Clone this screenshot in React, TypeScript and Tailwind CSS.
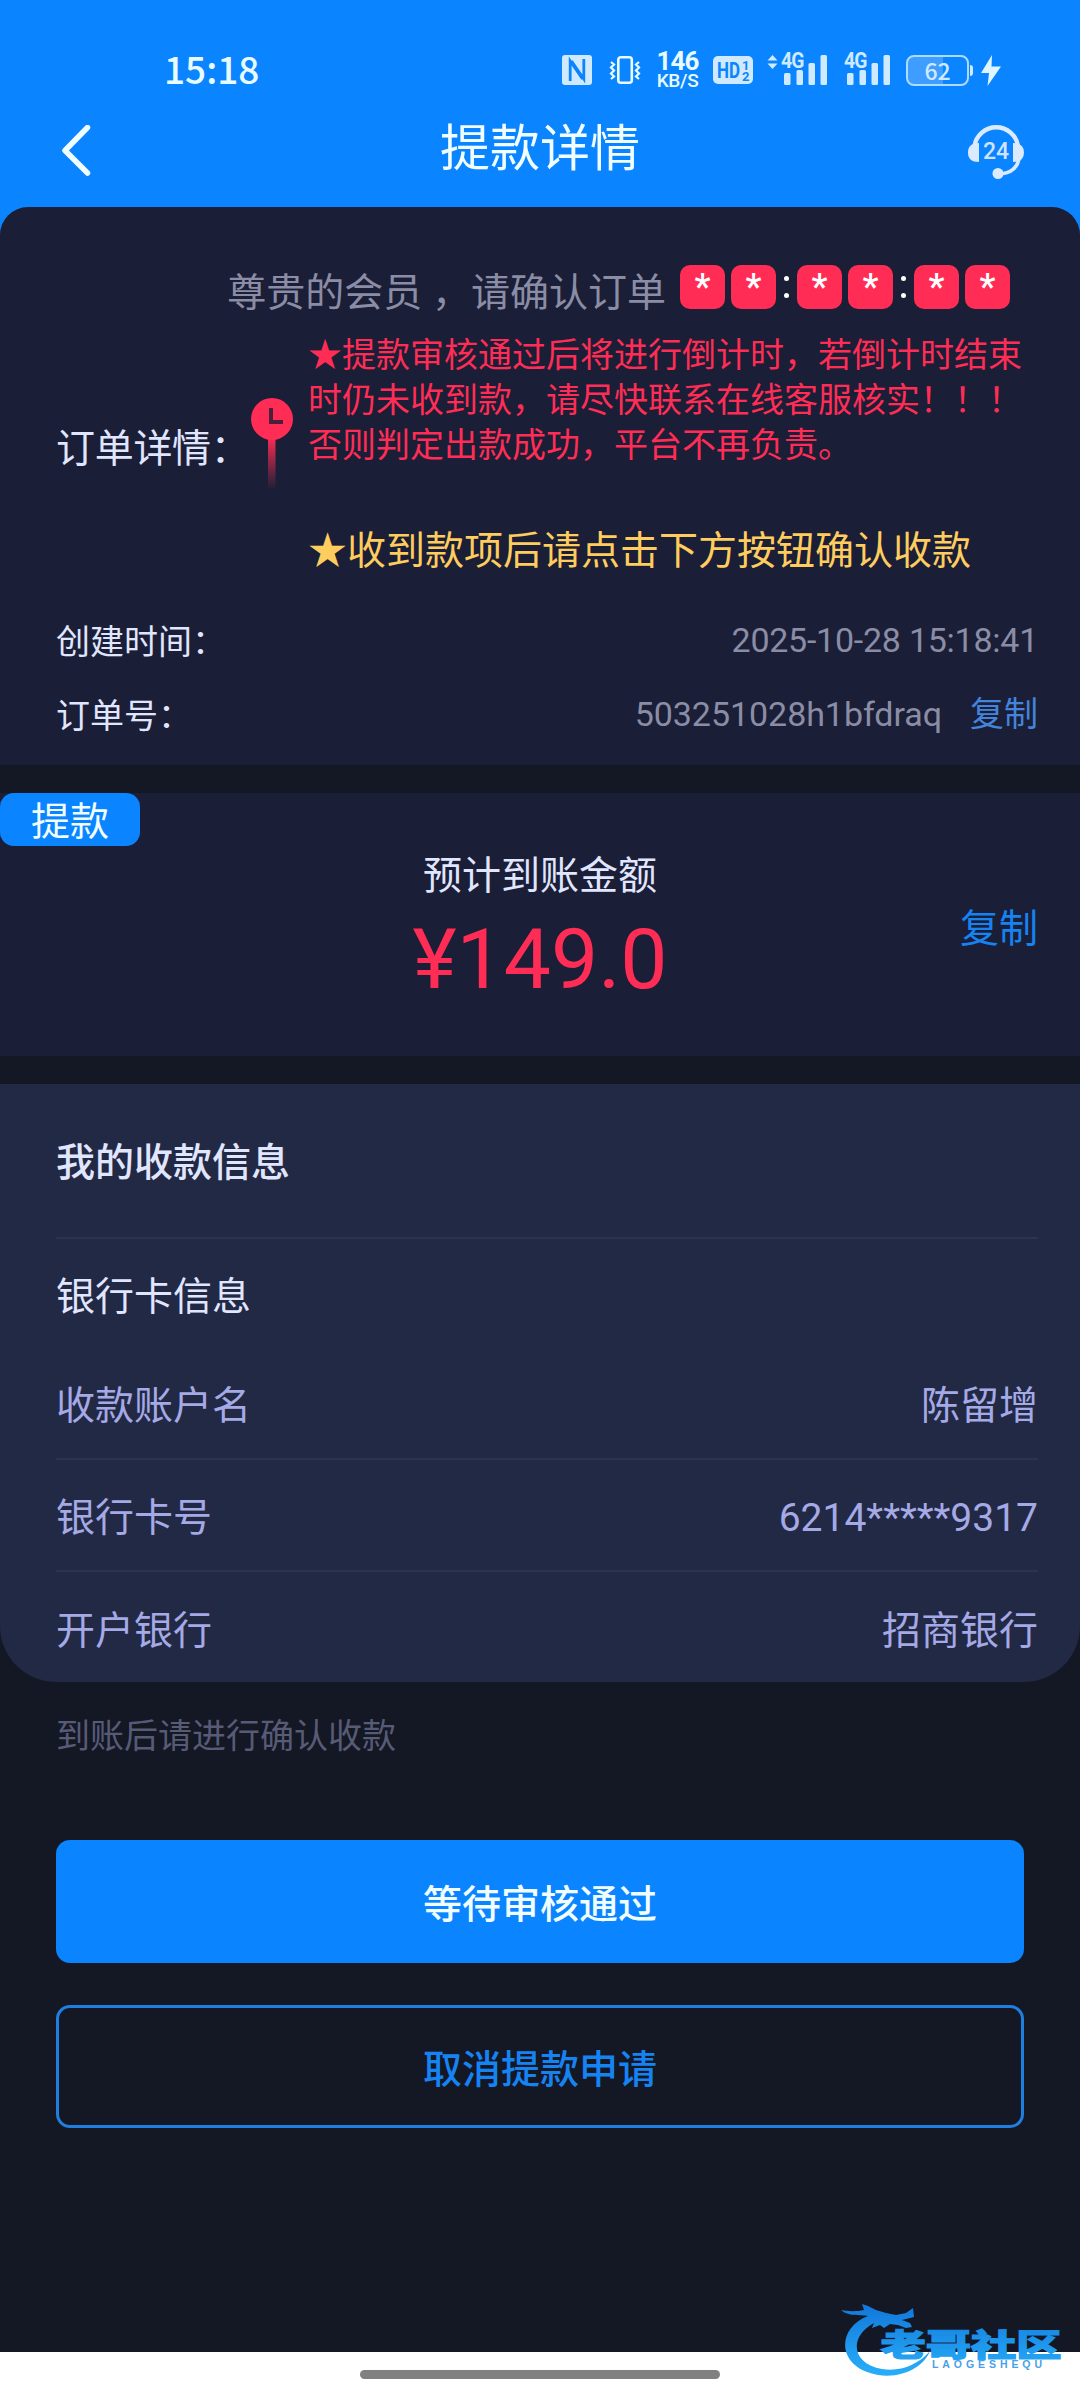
import type { ReactNode } from "react";

const sans = "font-['Roboto','Noto_Sans_CJK_SC',sans-serif]";
const cjk = "font-['Noto_Sans_CJK_SC',sans-serif]";

function SignalBars() {
  return (
    <svg className="h-[30px] w-[43px]" viewBox="0 0 43 30" fill="#cfeaff">
      <rect x="0" y="18" width="6.5" height="12" rx="1.5" />
      <rect x="12.5" y="15" width="6.5" height="15" rx="1.5" />
      <rect x="24.5" y="8" width="6.5" height="22" rx="1.5" />
      <rect x="36.5" y="0" width="6.5" height="30" rx="1.5" />
    </svg>
  );
}

function Signal({ arrows = false }: { arrows?: boolean }) {
  return (
    <div className={arrows ? "relative ml-[31px]" : "relative ml-5"}>
      {arrows && (
        <svg className="absolute -left-[17px] top-0 h-[14px] w-[11px]" viewBox="0 0 11 14" fill="#cfeaff">
          <path d="M5.500 0L10.500 5.500H.5zM5.500 14L10.500 8.500H.5z" />
        </svg>
      )}
      <span className="absolute -left-[3px] -top-[4px] origin-left scale-x-[0.88] font-['Roboto'] text-[22px] font-bold leading-[20px] tracking-[-1px] text-[#cfeaff]">
        4G
      </span>
      <SignalBars />
    </div>
  );
}

function StatusBar() {
  return (
    <div className="flex h-[94px] items-end pb-[5px] pl-[164px] pr-[79px]">
      <span className={`${cjk} mb-[6px] text-[37px] font-medium leading-[30px] text-[#e8fbff]`}>15:18</span>
      <div className="ml-auto flex items-center">
        <svg className="h-[30px] w-[30px]" viewBox="0 0 30 30">
          <rect width="30" height="30" rx="3" fill="#cfeaff" />
          <path d="M8.200 26V6L20.500 24" fill="none" stroke="#0a84ff" strokeWidth="2.800" />
          <path d="M9.500 6L21.800 24V4" fill="none" stroke="#0a84ff" strokeWidth="2.800" />
        </svg>
        <svg className="ml-[17px] h-[28px] w-[32px]" viewBox="0 0 32 28" fill="none" stroke="#e8fbff" strokeWidth="2.600">
          <rect x="9.300" y="1.300" width="13.500" height="25.400" rx="2.500" />
          <path d="M2 6L5 8.500L2 11.500L5 14.500L2 17.500L5 20.500L2 23M30 6L27 8.500L30 11.500L27 14.500L30 17.500L27 20.500L30 23" strokeWidth="2.200" />
        </svg>
        <div className="ml-[15px] flex h-[38px] w-[43px] flex-col items-center font-['Roboto'] text-[#e8fbff]">
          <span className="text-[26px] font-bold leading-[20px] tracking-[-1px]">146</span>
          <span className="mt-px text-[19px] font-medium leading-[18px] tracking-[-0.300px]">KB/S</span>
        </div>
        <svg className="ml-[14px] h-[28px] w-[40px]" viewBox="0 0 40 28">
          <rect width="40" height="28" rx="5" fill="#cfeaff" />
          <g fill="#0a84ff" fontFamily="Roboto" fontWeight="700">
            <text x="4" y="22" fontSize="22" textLength="23" lengthAdjust="spacingAndGlyphs">HD</text>
            <text x="29" y="14" fontSize="13">1</text>
            <text x="29" y="25" fontSize="13">2</text>
          </g>
        </svg>
        <Signal arrows />
        <Signal />
        <div className="ml-4 flex items-center">
          <div className="flex h-[31px] w-[63px] items-center justify-center rounded-[8px] border-2 border-[#a9dcff] bg-linear-to-r from-[#3f9dff] from-60% to-[#0a84ff] to-60%">
            <span className={`${cjk} text-[23px] font-medium leading-[27px] text-[#cfeaff]`}>62</span>
          </div>
          <div className="ml-px h-[11px] w-[3px] rounded-r-sm bg-[#cfeaff]" />
          <svg className="ml-2 h-[31px] w-[20px]" viewBox="0 0 20 31" fill="#dff5ff">
            <path d="M11 0L0 18H8L6.500 31L20 11.500H10.500z" />
          </svg>
        </div>
      </div>
    </div>
  );
}

function TitleBar() {
  return (
    <div className="flex h-[113px] items-center justify-between pl-[61px] pr-[56px]">
      <svg className="h-[52px] w-[32px]" viewBox="0 0 32 52" fill="none" stroke="#f0feff" strokeWidth="5.500" strokeLinecap="round" strokeLinejoin="round">
        <path d="M26.500 2.500L4 25.500L26.500 48" />
      </svg>
      <h1 className={`${cjk} mb-[14px] ml-[19px] whitespace-nowrap text-[50px] leading-[60px] text-[#f0feff]`}>提款详情</h1>
      <svg className="h-[56px] w-[56px]" viewBox="0 0 56 56">
        <path d="M6.500 23A22 22 0 0 1 50 23" fill="none" stroke="#dceaff" strokeWidth="4.500" />
        <path d="M51 36Q48 50 32 51" fill="none" stroke="#dceaff" strokeWidth="3.600" />
        <path d="M11 20V39Q0 39 0 29.500Q0 20 11 20zM45 20V39Q56 39 56 29.500Q56 20 45 20z" fill="#dceaff" />
        <circle cx="30" cy="50.500" r="5.500" fill="#dceaff" />
        <text x="28" y="36" textAnchor="middle" fontFamily="Roboto" fontSize="23" fontWeight="500" fill="#cfe2ff">24</text>
      </svg>
    </div>
  );
}

function Digit() {
  return (
    <span className="flex h-[44px] w-[45px] justify-center rounded-[10px] bg-[#ff2d55] font-['Roboto'] text-[36px] font-medium leading-[44px] text-white">
      *
    </span>
  );
}

function Colon() {
  return (
    <span className="flex h-[44px] w-[21px] flex-col items-center justify-center gap-3 text-white">
      <i className="size-[5px] rounded-full bg-white" />
      <i className="size-[5px] rounded-full bg-white" />
    </span>
  );
}

function Pair() {
  return (
    <span className="flex gap-[6px]">
      <Digit />
      <Digit />
    </span>
  );
}

function TimerPin() {
  return (
    <svg className="h-[98px] w-[42px]" viewBox="0 0 42 98">
      <defs>
        <linearGradient id="stem" x1="0" y1="0" x2="0" y2="1">
          <stop offset="0" stopColor="#ff2d55" />
          <stop offset="0.900" stopColor="#ff2d55" stopOpacity="0" />
        </linearGradient>
      </defs>
      <rect x="17" y="38" width="7.500" height="60" fill="url(#stem)" />
      <circle cx="21" cy="21" r="21" fill="#ff2d55" />
      <path d="M20 10V24H32" fill="none" stroke="#4a1f3c" strokeWidth="4" />
    </svg>
  );
}

function InfoRow({ label, children }: { label: string; children: ReactNode }) {
  return (
    <div className="flex h-[74px] items-center justify-between text-[34px]">
      <span className={`${cjk} pt-[2px] text-[#e1e6ff]`}>{label}</span>
      <div className="flex items-center gap-[28px] pt-[5px] text-[#8a8da5]">{children}</div>
    </div>
  );
}

function BankRow({ label, value, last = false }: { label: string; value: string; last?: boolean }) {
  return (
    <div
      className={
        last
          ? "flex h-[111px] items-center justify-between pt-[7px] text-[#a5a9e6]"
          : "flex h-[112px] items-center justify-between border-b-2 border-[#2c3350] pt-[7px] text-[#a5a9e6]"
      }
    >
      <span>{label}</span>
      <span>{value}</span>
    </div>
  );
}

function Watermark() {
  return (
    <div className="absolute bottom-[15px] right-[16px] h-[84px] w-[224px]">
      <svg className="h-full w-full" viewBox="0 0 224 84">
        <defs>
          <linearGradient id="wm" gradientUnits="userSpaceOnUse" x1="0" y1="5" x2="0" y2="72">
            <stop offset="0" stopColor="#1278dc" />
            <stop offset="1" stopColor="#27adf7" />
          </linearGradient>
        </defs>
        <path
          d="M28 15C-4 27 -4 67 38 74C64 78 85 64 90 50C78 64 60 71 42 68C12 63 8 36 34 22L32 27L40 24L44 27L50 23L58 24L66 27L72 26L70 22L62 19L74 16L73 7L66 12L56 14L46 12L36 9L28 5L22 3L24 9C14 11 8 10 1 9C8 16 20 13 28 15z"
          fill="url(#wm)"
        />
        <text x="40.500" y="55" fontFamily="Noto Sans CJK SC" fontSize="31" fontWeight="900" fill="url(#wm)" stroke="url(#wm)" strokeWidth="1.200" textLength="181" lengthAdjust="spacingAndGlyphs">
          老哥社区
        </text>
        <text x="92" y="67" fontFamily="Liberation Sans" fontSize="10.500" fontWeight="700" fill="#4b9fe8" textLength="110">
          LAOGESHEQU
        </text>
      </svg>
    </div>
  );
}

export default function App() {
  return (
    <div className={`relative flex h-[2400px] w-[1080px] flex-col overflow-hidden bg-[#141724] ${sans}`} lang="zh-CN">
      <header className="bg-[#0a84ff]">
        <StatusBar />
        <TitleBar />
      </header>

      <div className="bg-[#0a84ff]">
        <section className="h-[558px] rounded-t-[28px] bg-[#1a1e36] pl-[56px] pr-[42px] pt-[58px]">
          <div className="flex h-[50px] items-start justify-end pr-[28px]">
            <p className="mr-[14px] mt-[3px] whitespace-pre text-[39px] leading-[50px] text-[#8a8da5]">尊贵的会员 ，请确认订单</p>
            <Pair />
            <Colon />
            <Pair />
            <Colon />
            <Pair />
          </div>
          <div className={`${cjk} flex h-[261px]`}>
            <span className="mt-[101px] w-[195px] whitespace-nowrap text-[39px] leading-[58px] tracking-[-0.300px] text-[#e1e6ff]">订单详情：</span>
            <div className="mt-[83px] w-[57px]">
              <TimerPin />
            </div>
            <div className="whitespace-nowrap">
              <p className="mt-[15px] text-[34px] leading-[45px] text-[#ff2d55]">
                ★提款审核通过后将进行倒计时，若倒计时结束
                <br />
                时仍未收到款，请尽快联系在线客服核实！！！
                <br />
                否则判定出款成功，平台不再负责。
              </p>
              <p className="mt-[53px] text-[39px] leading-[58px] text-[#ffcc5e]">★收到款项后请点击下方按钮确认收款</p>
            </div>
          </div>
          <div className="mt-[25px]">
            <InfoRow label="创建时间：">
              <span className="tracking-[-0.250px]">2025-10-28 15:18:41</span>
            </InfoRow>
            <InfoRow label="订单号：">
              <span className="tracking-[-0.050px]">503251028h1bfdraq</span>
              <span className="text-[#4484dc]">复制</span>
            </InfoRow>
          </div>
        </section>
      </div>

      <section className="relative mt-[28px] flex h-[263px] flex-col items-center bg-[#1a1e36]">
        <span className="absolute left-0 top-0 flex h-[53px] w-[140px] items-center justify-center rounded-[14px] bg-[#0a84ff] pt-[6px] text-[39px] leading-[53px] text-[#f0feff]">
          提款
        </span>
        <p className={`${cjk} mt-[50px] text-[39px] leading-[58px] text-[#e1e6ff]`}>预计到账金额</p>
        <p className="mt-[10px] text-[84px] leading-[98px] text-[#ff2d55]">¥149.0</p>
        <span className="absolute right-[42px] top-[107px] text-[39px] leading-[58px] text-[#1683f2]">复制</span>
      </section>

      <section className="mt-[28px] h-[598px] rounded-b-[56px] bg-[#222944] pl-[56px] pr-[42px] text-[39px] text-[#e1e6ff]">
        <h2 className="flex h-[155px] items-center border-b-2 border-[#2c3350] pt-[6px] font-medium">我的收款信息</h2>
        <h3 className="flex h-[109px] items-center pt-[8px]">银行卡信息</h3>
        <BankRow label="收款账户名" value="陈留增" />
        <BankRow label="银行卡号" value="6214*****9317" />
        <BankRow label="开户银行" value="招商银行" last />
      </section>

      <p className="ml-[56px] mt-[29px] text-[34px] leading-[50px] text-[#575b76]">到账后请进行确认收款</p>
      <div className="ml-[56px] mt-[79px] flex w-[968px] flex-col gap-[42px] text-[39px] font-medium">
        <button className="h-[123px] rounded-[14px] bg-[#0a84ff] pt-[7px] text-[#f0feff]">等待审核通过</button>
        <button className="h-[123px] rounded-[14px] border-3 border-[#1f7fe0] pt-[7px] text-[#1683f2]">取消提款申请</button>
      </div>

      <footer className="mt-auto flex h-[48px] items-start justify-center bg-white pt-[18px]">
        <div className="h-[9px] w-[360px] rounded-full bg-[#808080]" />
      </footer>
      <Watermark />
    </div>
  );
}
